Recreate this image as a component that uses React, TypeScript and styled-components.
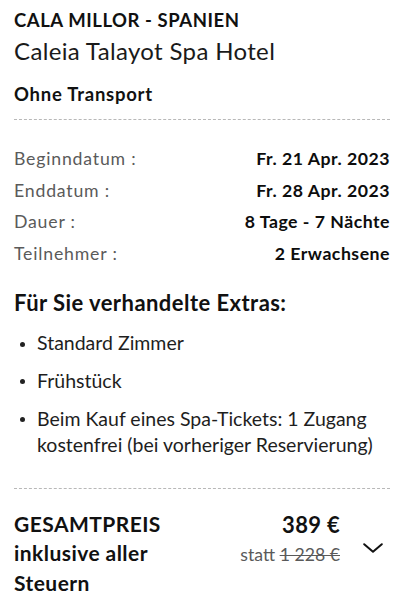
import React from "react";
import styled, { createGlobalStyle } from "styled-components";

const Global = createGlobalStyle`
  html, body { margin: 0; padding: 0; background: #fff; }
  body { font-family: Lato, "Noto Sans", sans-serif; color: #111; }
`;

const Page = styled.div`
  padding: 8px 12px 0 14px;
  display: flex;
  flex-direction: column;
`;

const Region = styled.div`
  font-size: 18.5px;
  font-weight: 700;
  line-height: 24px;
  letter-spacing: 0.55px;
`;

const Hotel = styled.div`
  font-size: 24px;
  font-weight: 400;
  line-height: 30px;
  letter-spacing: 0.35px;
  margin-top: 4.4px;
  color: #1a1a1a;
`;

const Transport = styled.div`
  font-size: 18.5px;
  font-weight: 700;
  line-height: 24px;
  letter-spacing: 0.75px;
  margin-top: 16px;
`;

const Divider = styled.hr<{ $top: number; $bottom: number }>`
  border: 0;
  border-top: 1px dashed #b8b8b8;
  margin: ${(p) => p.$top}px 0 ${(p) => p.$bottom}px;
  height: 0;
`;

const Details = styled.div`
  display: flex;
  flex-direction: column;
`;

const Row = styled.div`
  display: flex;
  justify-content: space-between;
  align-items: baseline;
  font-size: 17.7px;
  line-height: 31.4px;
`;

const Label = styled.span`
  color: #5a5a5a;
  letter-spacing: 0.8px;
`;

const Value = styled.span`
  font-weight: 700;
  color: #0d0d0d;
  letter-spacing: 0.5px;
`;

const ExtrasTitle = styled.div`
  font-size: 22px;
  font-weight: 700;
  line-height: 28px;
  letter-spacing: 0.45px;
  margin-top: 20.2px;
`;

const List = styled.ul`
  list-style: none;
  margin: 12.8px 0 0;
  padding: 0;
  display: flex;
  flex-direction: column;
  gap: 11.7px;
`;

const Item = styled.li`
  display: flex;
  font-size: 19.5px;
  line-height: 26.3px;
  color: #1e1e1e;
`;

const Bullet = styled.span`
  width: 23px;
  flex: none;
  &::before {
    content: "";
    display: block;
    width: 5px;
    height: 5px;
    border-radius: 50%;
    background: #222;
    margin: 11.5px 0 0 6px;
  }
`;

const Total = styled.div`
  display: flex;
  align-items: flex-start;
`;

const TotalLabel = styled.div`
  flex: 1;
  font-size: 21px;
  font-weight: 700;
  line-height: 29.5px;
  letter-spacing: 0.45px;
`;

const Prices = styled.div`
  display: flex;
  flex-direction: column;
  align-items: flex-end;
  margin-top: 1.7px;
`;

const Price = styled.div`
  font-size: 22px;
  font-weight: 700;
  line-height: 28px;
  letter-spacing: 0.3px;
`;

const OldPrice = styled.div`
  font-size: 17.7px;
  line-height: 32px;
  color: #5a5a5a;
  letter-spacing: 0;
  s { text-decoration-thickness: 1px; }
`;

const Toggle = styled.button`
  border: 0;
  background: none;
  padding: 0;
  margin: 34px 7px 0 23px;
  width: 20px;
  height: 10px;
  display: flex;
  color: #111;
`;

const rows: [string, string][] = [
  ["Beginndatum :", "Fr. 21 Apr. 2023"],
  ["Enddatum :", "Fr. 28 Apr. 2023"],
  ["Dauer :", "8 Tage - 7 Nächte"],
  ["Teilnehmer :", "2 Erwachsene"],
];

const extras = [
  "Standard Zimmer",
  "Frühstück",
  "Beim Kauf eines Spa-Tickets: 1 Zugang kostenfrei (bei vorheriger Reservierung)",
];

export default function App() {
  return (
    <>
      <Global />
      <Page>
        <Region>CALA MILLOR - SPANIEN</Region>
        <Hotel>Caleia Talayot Spa Hotel</Hotel>
        <Transport>Ohne Transport</Transport>
        <Divider $top={12.5} $bottom={23.5} />
        <Details>
          {rows.map(([l, v]) => (
            <Row key={l}>
              <Label>{l}</Label>
              <Value>{v}</Value>
            </Row>
          ))}
        </Details>
        <ExtrasTitle>Für Sie verhandelte Extras:</ExtrasTitle>
        <List>
          {extras.map((e) => (
            <Item key={e}>
              <Bullet />
              <span>{e}</span>
            </Item>
          ))}
        </List>
        <Divider $top={29.4} $bottom={20} />
        <Total>
          <TotalLabel>
            GESAMTPREIS
            <br />
            inklusive aller
            <br />
            Steuern
          </TotalLabel>
          <Prices>
            <Price>389 €</Price>
            <OldPrice>
              statt <s>1 228 €</s>
            </OldPrice>
          </Prices>
          <Toggle aria-label="Details">
            <svg width="20" height="10" viewBox="0 0 20 10" fill="none">
              <path d="M1.2 1.2 L10 8.8 L18.8 1.2" stroke="currentColor" strokeWidth="2" strokeLinecap="round" strokeLinejoin="round" />
            </svg>
          </Toggle>
        </Total>
      </Page>
    </>
  );
}
